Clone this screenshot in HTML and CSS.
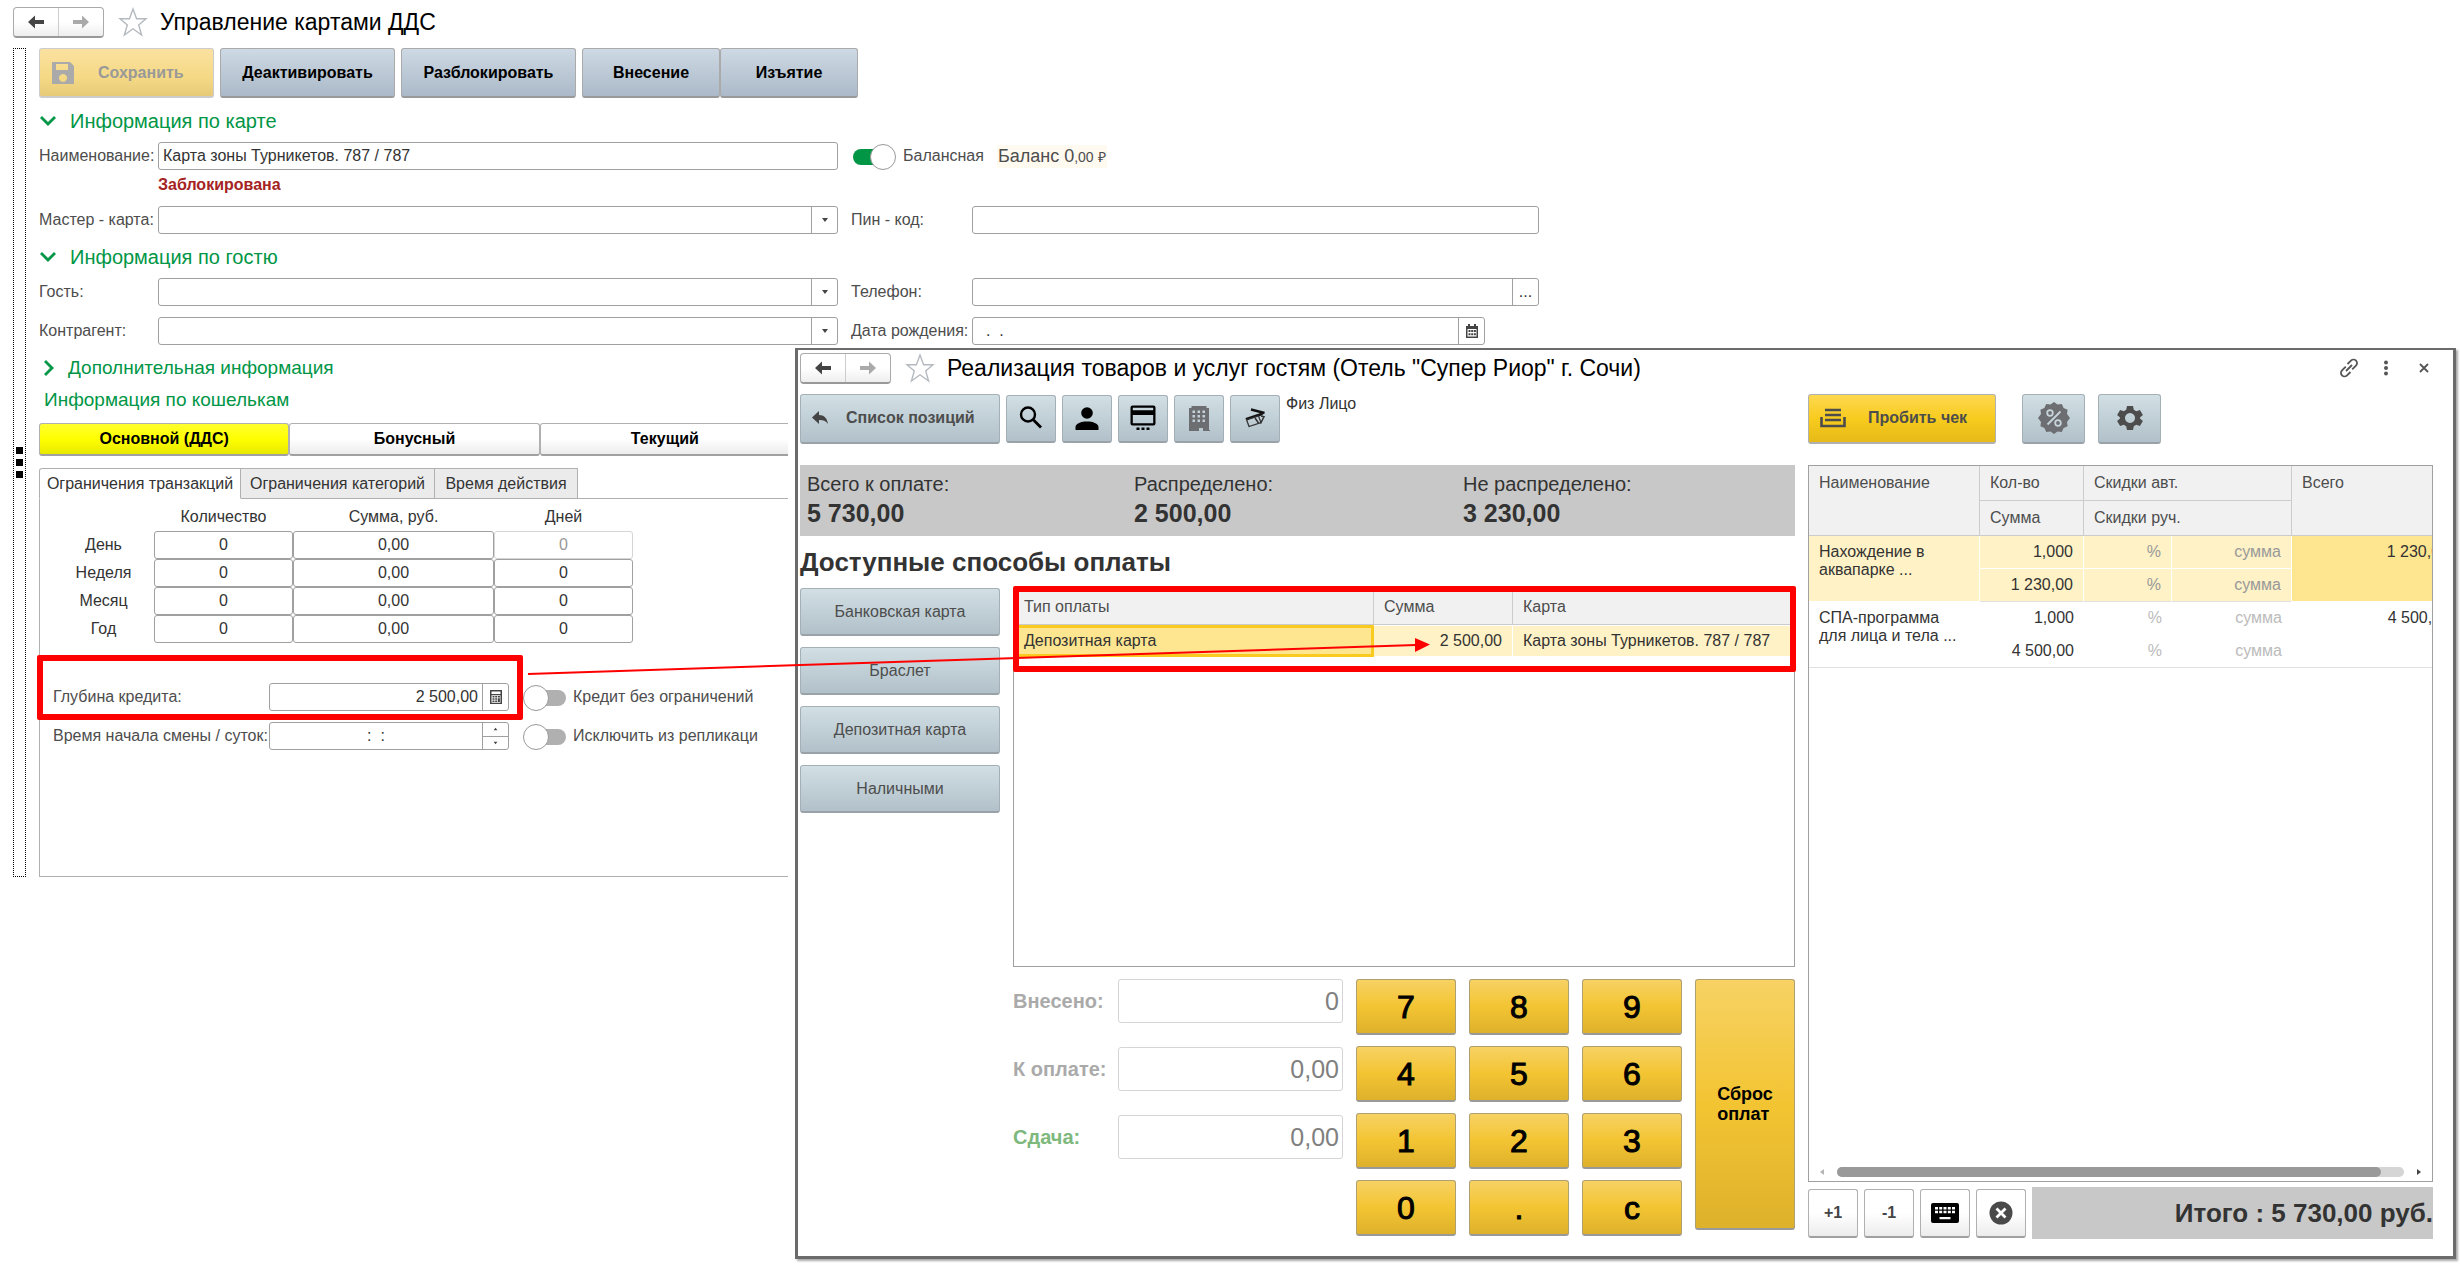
FILE: index.html
```html
<!DOCTYPE html>
<html lang="ru">
<head>
<meta charset="utf-8">
<title>Управление картами ДДС</title>
<link rel="stylesheet" href="styles.css">
</head>
<body>
<svg class="defs" aria-hidden="true">
  <symbol id="i-back" viewBox="0 0 20 16"><path d="M9 1.500 2 8l7 6.500V10h9V6H9z"/></symbol>
  <symbol id="i-fwd" viewBox="0 0 20 16"><path d="M11 1.500 18 8l-7 6.500V10H2V6h9z"/></symbol>
  <symbol id="i-star" viewBox="0 0 30 30"><path d="M15 2l3.600 9.700H28l-7.300 6.200L23.600 28 15 21.800 6.400 28l2.900-10.100L2 11.700h9.400z" fill="none" stroke="#b4bac0" stroke-width="1.400"/></symbol>
  <symbol id="i-open" viewBox="0 0 18 12"><path d="M2 2l7 7 7-7" fill="none" stroke="#009646" stroke-width="2.800"/></symbol>
  <symbol id="i-closed" viewBox="0 0 12 18"><path d="M2 2l7 7-7 7" fill="none" stroke="#009646" stroke-width="2.800"/></symbol>
  <symbol id="i-down" viewBox="0 0 8 6"><path d="M1 1h6L4 5z"/></symbol>
  <symbol id="i-up" viewBox="0 0 8 6"><path d="M1 5h6L4 1z"/></symbol>
</svg>

<main class="page">
  <header class="title-bar">
    <div class="nav-pair">
      <button type="button" aria-label="Назад"><svg class="arrow"><use href="#i-back"/></svg></button>
      <button type="button" aria-label="Вперёд" disabled><svg class="arrow"><use href="#i-fwd"/></svg></button>
    </div>
    <svg class="star"><use href="#i-star"/></svg>
    <h1>Управление картами ДДС</h1>
  </header>

  <div class="workspace">
    <div class="splitter"><i></i><i></i><i></i></div>
    <div class="card-form">
      <div class="commands">
        <button type="button" class="cmd save" disabled><svg viewBox="0 0 24 24" class="disk"><path fill-rule="evenodd" d="M1 1h18l4 4v18H1zM5 3v6h12V3zM12 13a4 4 0 1 0 .01 0z"/></svg><span>Сохранить</span></button>
        <button type="button" class="cmd">Деактивировать</button>
        <button type="button" class="cmd">Разблокировать</button>
        <div class="cmd-group">
          <button type="button" class="cmd">Внесение</button>
          <button type="button" class="cmd">Изъятие</button>
        </div>
      </div>

      <h2 class="group"><svg class="chev"><use href="#i-open"/></svg>Информация по карте</h2>
      <div class="fields">
        <label for="name">Наименование:</label>
        <input class="box" id="name" value="Карта зоны Турникетов. 787 / 787">
        <div class="balance">
          <label class="switch"><input type="checkbox" checked><i></i>Балансная</label>
          <span class="sum"><b>Баланс 0</b>,00 ₽</span>
        </div>
      </div>
      <p class="blocked">Заблокирована</p>
      <div class="fields">
        <label for="master">Мастер - карта:</label>
        <div class="box combo"><input id="master"><button type="button" aria-label="Выбрать"><svg class="tri"><use href="#i-down"/></svg></button></div>
        <label for="pin">Пин - код:</label>
        <input class="box" id="pin">
      </div>

      <h2 class="group second"><svg class="chev"><use href="#i-open"/></svg>Информация по гостю</h2>
      <div class="fields">
        <label for="guest">Гость:</label>
        <div class="box combo"><input id="guest"><button type="button" aria-label="Выбрать"><svg class="tri"><use href="#i-down"/></svg></button></div>
        <label for="phone">Телефон:</label>
        <div class="box combo"><input id="phone"><button type="button">...</button></div>
        <label for="partner">Контрагент:</label>
        <div class="box combo"><input id="partner"><button type="button" aria-label="Выбрать"><svg class="tri"><use href="#i-down"/></svg></button></div>
        <label for="birth">Дата рождения:</label>
        <div class="box combo date"><input id="birth" value="  .  ."><button type="button" aria-label="Календарь"><svg class="cal" viewBox="0 0 14 14"><path fill-rule="evenodd" d="M1 2h2V0h2v2h4V0h2v2h2v12H1zM2.500 5v7.500h9V5z"/><path d="M3.500 6h2v2h-2zM6.200 6h2v2h-2zM8.900 6h2v2h-2zM3.500 9.300h2v2h-2zM6.200 9.300h2v2h-2zM8.900 9.300h2v2h-2z"/></svg></button></div>
      </div>

      <section class="wallets">
        <h2 class="group"><svg class="chev closed"><use href="#i-closed"/></svg>Дополнительная информация</h2>
        <h2 class="group plain">Информация по кошелькам</h2>
        <div class="wallet-tabs">
          <button type="button" class="on">Основной (ДДС)</button>
          <button type="button">Бонусный</button>
          <button type="button">Текущий</button>
        </div>
        <div class="tabs">
          <button type="button" class="on">Ограничения транзакций</button>
          <button type="button">Ограничения категорий</button>
          <button type="button">Время действия</button>
        </div>
        <div class="tab-body">
          <table class="limits">
            <thead><tr><td></td><th>Количество</th><th>Сумма, руб.</th><th>Дней</th></tr></thead>
            <tbody>
              <tr><th>День</th><td><input aria-label="День, количество" value="0"></td><td><input aria-label="День, сумма" value="0,00"></td><td><input aria-label="День, дней" value="0" disabled></td></tr>
              <tr><th>Неделя</th><td><input aria-label="Неделя, количество" value="0"></td><td><input aria-label="Неделя, сумма" value="0,00"></td><td><input aria-label="Неделя, дней" value="0"></td></tr>
              <tr><th>Месяц</th><td><input aria-label="Месяц, количество" value="0"></td><td><input aria-label="Месяц, сумма" value="0,00"></td><td><input aria-label="Месяц, дней" value="0"></td></tr>
              <tr><th>Год</th><td><input aria-label="Год, количество" value="0"></td><td><input aria-label="Год, сумма" value="0,00"></td><td><input aria-label="Год, дней" value="0"></td></tr>
            </tbody>
          </table>
          <div class="credit">
            <div class="marker left"></div>
            <label for="depth">Глубина кредита:</label>
            <div class="box combo num"><input id="depth" value="2 500,00"><button type="button" aria-label="Калькулятор"><svg class="cal" viewBox="0 0 14 14"><path fill-rule="evenodd" d="M1 0h12v14H1zM2.500 1.500V4h9V1.500zM2.500 5.200v7.500h9V5.200z"/><path d="M3.500 6h2v1.500h-2zM6.200 6h2v1.500h-2zM8.900 6h2v1.500h-2zM3.500 8.300h2v1.500h-2zM6.200 8.300h2v1.500h-2zM8.900 8.300h2v3.700h-2zM3.500 10.500h2V12h-2zM6.200 10.500h2V12h-2z"/></svg></button></div>
            <label class="switch"><input type="checkbox"><i></i>Кредит без ограничений</label>
            <label for="shift">Время начала смены / суток:</label>
            <div class="box combo time"><input id="shift" value=":  :"><span class="spin"><button type="button" aria-label="Больше"><svg class="tri"><use href="#i-up"/></svg></button><button type="button" aria-label="Меньше"><svg class="tri"><use href="#i-down"/></svg></button></span></div>
            <label class="switch"><input type="checkbox"><i></i>Исключить из репликаци</label>
          </div>
        </div>
      </section>
    </div>
  </div>
</main>

<section class="window">
  <header class="title-bar">
    <div class="nav-pair">
      <button type="button" aria-label="Назад"><svg class="arrow"><use href="#i-back"/></svg></button>
      <button type="button" aria-label="Вперёд" disabled><svg class="arrow"><use href="#i-fwd"/></svg></button>
    </div>
    <svg class="star"><use href="#i-star"/></svg>
    <h1>Реализация товаров и услуг гостям (Отель "Супер Риор" г. Сочи)</h1>
    <div class="win-tools">
      <button type="button" aria-label="Ссылка"><svg viewBox="0 0 20 20" class="link"><path d="M8.500 6 12 2.600a3.500 3.500 0 0 1 5 5L13.200 11.300M11.500 14 8 17.400a3.500 3.500 0 0 1-5-5L6.800 8.700M7 13l6-6"/></svg></button>
      <button type="button" aria-label="Ещё"><svg viewBox="0 0 6 16" class="dots"><circle cx="3" cy="2.500" r="2"/><circle cx="3" cy="8" r="2"/><circle cx="3" cy="13.500" r="2"/></svg></button>
      <button type="button" aria-label="Закрыть"><svg viewBox="0 0 10 10" class="cross"><path d="M1 1l8 8M9 1 1 9"/></svg></button>
    </div>
  </header>

  <div class="columns">
    <div class="pay">
      <div class="bar">
        <button type="button" class="key back"><svg viewBox="0 0 16 14"><path d="M7 0v4c5 0 8 3 9 9-2-3-4.500-4.200-9-4v4L0 6.500z"/></svg><span>Список позиций</span></button>
        <button type="button" class="key icon" aria-label="Поиск"><svg viewBox="0 0 26 26"><circle cx="10" cy="9.500" r="7" fill="none" stroke="#000" stroke-width="2.400"/><path d="M15 14.500l8 8" stroke="#000" stroke-width="2.800"/></svg></button>
        <button type="button" class="key icon" aria-label="Гость"><svg viewBox="0 0 26 26"><circle cx="13" cy="8" r="5.800"/><path d="M1.500 25v-3c0-7.500 23-7.500 23 0v3z"/></svg></button>
        <button type="button" class="key icon" aria-label="Карта"><svg viewBox="0 0 26 26"><path fill-rule="evenodd" d="M2.500 .5h21q2 0 2 2v16q0 2-2 2h-21q-2 0-2-2v-16q0-2 2-2zM2.800 2.800v2.500h20.400V2.800zM2.800 10v8.200h20.400V10z"/><path d="M6.500 22.500h3V25h-3zM11.500 22.500h3V25h-3zM16.500 22.500h3V25h-3z"/></svg></button>
        <button type="button" class="key icon" aria-label="Организация"><svg viewBox="0 0 26 26" fill="#6d6e71"><path fill-rule="evenodd" d="M3 3h2.500V1h15v2H23v22h1v1h-7v-3h-4v3H3zM6.500 5.500v2.500H9V5.500zM11.500 5.500v2.500h2.500V5.500zM16.500 5.500v2.500h2.500V5.500zM6.500 10v2.500H9V10zM11.500 10v2.500h2.500V10zM16.500 10v2.500h2.500V10zM6.500 14.500V17H9v-2.500zM11.500 14.500V17h2.500v-2.500zM16.500 14.500V17h2.500v-2.500z"/></svg></button>
        <button type="button" class="key icon" aria-label="Платёжные карты"><svg viewBox="0 0 26 26"><path d="M9 4.500 22.500 8" stroke="#111" stroke-width="2.600"/><path d="M3.500 13 20 7.500l1 2.500-16.500 5.500z" fill="#111"/><path d="M4.500 14.500 16.500 11l2.500 6.500L7 21.500z" fill="none" stroke="#333" stroke-width="1.300"/><path d="M19 11l3 .8-3.500 6.700M13 13l3.500 5" fill="none" stroke="#333" stroke-width="1.500"/></svg></button>
        <span class="person">Физ Лицо</span>
      </div>

      <dl class="totals">
        <div><dt>Всего к оплате:</dt><dd>5 730,00</dd></div>
        <div><dt>Распределено:</dt><dd>2 500,00</dd></div>
        <div><dt>Не распределено:</dt><dd>3 230,00</dd></div>
      </dl>

      <h2 class="methods-title">Доступные способы оплаты</h2>
      <div class="methods">
        <div class="method-keys">
          <button type="button" class="key">Банковская карта</button>
          <button type="button" class="key">Браслет</button>
          <button type="button" class="key">Депозитная карта</button>
          <button type="button" class="key">Наличными</button>
        </div>
        <div class="pay-side">
          <div class="pay-list">
            <div class="marker right"></div>
            <table>
              <colgroup><col class="c-type"><col class="c-sum"><col></colgroup>
              <thead><tr><th>Тип оплаты</th><th>Сумма</th><th>Карта</th></tr></thead>
              <tbody><tr><td class="current">Депозитная карта</td><td class="r">2 500,00</td><td>Карта зоны Турникетов. 787 / 787</td></tr></tbody>
            </table>
          </div>
          <div class="cash">
            <div class="amounts">
              <label for="paid">Внесено:</label><input class="box" id="paid" value="0">
              <label for="due">К оплате:</label><input class="box" id="due" value="0,00">
              <label for="change" class="green">Сдача:</label><input class="box" id="change" value="0,00">
            </div>
            <div class="keypad">
              <button type="button">7</button><button type="button">8</button><button type="button">9</button>
              <button type="button">4</button><button type="button">5</button><button type="button">6</button>
              <button type="button">1</button><button type="button">2</button><button type="button">3</button>
              <button type="button">0</button><button type="button">.</button><button type="button">c</button>
              <button type="button" class="reset"><span>Сброс<br>оплат</span></button>
            </div>
          </div>
        </div>
      </div>
    </div>

    <div class="check">
      <div class="bar">
        <button type="button" class="key print"><svg viewBox="0 0 26 20"><path d="M5 2h16M5 7h16M5 12h16" stroke="#4d4d4d" stroke-width="2.400"/><path d="M1.500 9v9h23V9" fill="none" stroke="#4d4d4d" stroke-width="2.600"/></svg><span>Пробить чек</span></button>
        <button type="button" class="key sq" aria-label="Скидки"><svg viewBox="0 0 32 32"><path fill="#6d6e71" d="M16 0l3.500 2.600 4.300-.7 1.800 4 4 1.800-.6 4.300L32 16l-3 4 .6 4.300-4 1.800-1.800 4-4.300-.6L16 32l-3.500-2.500-4.300.6-1.800-4-4-1.800.6-4.300L0 16l3-4-.6-4.300 4-1.800 1.800-4 4.300.7z"/><path d="M22.500 9.500l-13 13" stroke="#c7d4db" stroke-width="1.800"/><circle cx="12" cy="11" r="2.800" fill="none" stroke="#c7d4db" stroke-width="1.800"/><circle cx="20" cy="21" r="2.800" fill="none" stroke="#c7d4db" stroke-width="1.800"/></svg></button>
        <button type="button" class="key sq" aria-label="Настройки"><svg viewBox="0 0 32 32"><path fill="#4d4d4d" fill-rule="evenodd" d="M13 4h6l.8 3.800 2.400 1.400 3.700-1.300 3 5.200-2.900 2.500v.8l2.900 2.500-3 5.200-3.700-1.300-2.400 1.400L19 28h-6l-.8-3.800-2.400-1.400-3.700 1.300-3-5.200L6 16.400v-.8l-2.900-2.500 3-5.200 3.700 1.300 2.400-1.400zM16 11a5 5 0 1 0 .01 0z"/></svg></button>
      </div>
      <div class="items">
        <table>
          <colgroup><col class="i-name"><col class="i-qty"><col class="i-pct"><col class="i-disc"><col class="i-all"></colgroup>
          <thead>
            <tr><th rowspan="2">Наименование</th><th>Кол-во</th><th colspan="2">Скидки авт.</th><th rowspan="2">Всего</th></tr>
            <tr><th>Сумма</th><th colspan="2">Скидки руч.</th></tr>
          </thead>
          <tbody class="sel">
            <tr><td rowspan="2">Нахождение в аквапарке ...</td><td class="r">1,000</td><td class="r hint">%</td><td class="r hint">сумма</td><td rowspan="2" class="r current">1 230,00</td></tr>
            <tr><td class="r">1 230,00</td><td class="r hint">%</td><td class="r hint">сумма</td></tr>
          </tbody>
          <tbody>
            <tr><td rowspan="2">СПА-программа для лица и тела ...</td><td class="r">1,000</td><td class="r hint">%</td><td class="r hint">сумма</td><td rowspan="2" class="r">4 500,00</td></tr>
            <tr><td class="r">4 500,00</td><td class="r hint">%</td><td class="r hint">сумма</td></tr>
          </tbody>
        </table>
        <div class="scroll"><svg viewBox="0 0 6 8"><path d="M5 1v6L1 4z" fill="#b5b5b5"/></svg><div class="track"><div class="thumb"></div></div><svg viewBox="0 0 6 8"><path d="M1 1v6l4-3z" fill="#444"/></svg></div>
      </div>
      <div class="foot">
        <button type="button" class="light">+1</button>
        <button type="button" class="light">-1</button>
        <button type="button" class="light" aria-label="Клавиатура"><svg viewBox="0 0 28 20" class="kbd"><path fill-rule="evenodd" d="M2 0h24q2 0 2 2v16q0 2-2 2H2q-2 0-2-2V2q0-2 2-2zM4 4v2.500h3V4zM8.200 4v2.500h3V4zM12.500 4v2.500h3V4zM16.800 4v2.500h3V4zM21 4v2.500h3V4zM4 7.800v2.500h3V7.800zM8.200 7.800v2.500h3V7.800zM12.500 7.800v2.500h3V7.800zM16.800 7.800v2.500h3V7.800zM21 7.800v2.500h3V7.800zM8.500 14v2.200h11V14z"/></svg></button>
        <button type="button" class="light" aria-label="Удалить"><svg viewBox="0 0 24 24" class="del"><circle cx="12" cy="12" r="11.500" fill="#4a4a4a"/><path d="M7.500 7.500l9 9M16.500 7.500l-9 9" stroke="#fff" stroke-width="2.800"/></svg></button>
        <output class="grand">Итого : 5 730,00 руб.</output>
      </div>
    </div>
  </div>
</section>

<svg class="pointer" viewBox="0 0 906 50" aria-hidden="true"><path d="M1 39 889 10" stroke="red" stroke-width="2"/><path d="M888 3l15 6.500L888 17z" fill="red"/></svg>
</body>
</html>
```
FILE: styles.css
```css
* { box-sizing: border-box; }
body { margin: 0; position: relative; display: grid; min-height: 100vh; background: #fff; color: #333; font: 16px/20px "Liberation Sans", Arial, sans-serif; }
h1, h2, p, dl, dd { margin: 0; font-weight: normal; }
button, input { font: inherit; color: inherit; margin: 0; }
button { padding: 0; background: none; border: 0; border-radius: 3px; }
svg { display: block; }
.defs { position: absolute; width: 0; height: 0; }
table { border-collapse: separate; border-spacing: 0; }
th { font-weight: normal; text-align: left; }
.r { text-align: right; }

/* title bars */
.title-bar { display: flex; align-items: center; gap: 14px; height: 30px; }
.title-bar h1 { font-size: 23px; line-height: 26px; color: #000; margin-left: -2px; }
.nav-pair { display: flex; width: 91px; height: 31px; border: 1px solid #aaa; border-bottom: 2px solid #999; border-radius: 4px; background: linear-gradient(#fff, #fff 50%, #eee); }
.nav-pair button { flex: 1; display: flex; align-items: center; justify-content: center; fill: #444; }
.nav-pair button + button { border-left: 1px solid #ccc; border-radius: 0; fill: #aaa; }
.arrow { width: 20px; height: 16px; }
.star { width: 30px; height: 30px; }

/* main form */
.page { grid-area: 1 / 1; min-width: 0; padding: 7px 0 0 13px; }
.workspace { display: flex; gap: 13px; margin-top: 11px; }
.splitter { width: 13px; border: 1px dotted #000; display: flex; flex-direction: column; align-items: center; justify-content: center; gap: 5px; }
.splitter i { width: 7px; height: 7px; background: #000; }
.card-form { width: 61.3%; min-width: 0; }
.commands, .cmd-group { display: flex; }
.commands { gap: 6px; }
.cmd { width: 175px; height: 50px; border: 1px solid #aaa; border-bottom: 2px solid #999; background: linear-gradient(#cdd9e4, #b9c6d3 60%, #acb9c9); font-weight: bold; color: #000; }
.cmd-group .cmd { width: 138px; }
.save { display: flex; align-items: center; background: linear-gradient(#fae1a0, #f5d985 60%, #e6ca78); border-color: #ccc; color: #999; padding-left: 11px; gap: 23px; }
.disk { width: 24px; height: 24px; fill: #aaa; }
.group { display: flex; align-items: center; gap: 13px; font-size: 20px; line-height: 24px; color: #009646; margin: 11px 0 9px; }
.chev { width: 18px; height: 12px; }
.chev.closed { width: 12px; height: 18px; margin-left: 4px; }
.fields { display: grid; grid-template-columns: 119px 680fr 134px 567fr; row-gap: 11px; align-items: center; color: #4d4d4d; white-space: nowrap; }
.fields > label:nth-of-type(even) { padding-left: 13px; }
.box { height: 28px; width: 100%; min-width: 0; border: 1px solid #a0a0a0; border-radius: 3px; background: #fff; padding: 0 4px; color: #333; }
.combo { display: flex; padding: 0; }
.combo input { flex: 1; min-width: 0; border: 0; background: none; padding: 0 4px; }
.combo > button { width: 26px; border-left: 1px solid #a0a0a0; border-radius: 0; display: flex; align-items: center; justify-content: center; fill: #444; }
.tri { width: 8px; height: 6px; fill: #444; }
.cal { width: 14px; height: 14px; fill: #444; }
.date { width: calc(100% - 54px); }
.date input { white-space: pre; }
.balance { grid-column: span 2; display: flex; align-items: center; gap: 13px; padding-left: 15px; }
.switch { position: relative; display: flex; align-items: center; gap: 7px; color: #4d4d4d; white-space: nowrap; }
.switch input { position: absolute; opacity: 0; }
.switch i { width: 43px; height: 24px; display: grid; grid-template-columns: 1fr; align-items: center; }
.switch i::before, .switch i::after { content: ""; grid-area: 1 / 1; }
.switch i::before { width: 30px; height: 16px; border-radius: 8px; background: #b0b0b0; justify-self: end; }
.switch i::after { width: 24px; height: 24px; border: 1px solid #999; border-radius: 50%; background: #fff; justify-self: start; }
.switch input:checked + i::before { justify-self: start; background: #009646; }
.switch input:checked + i::after { justify-self: end; }
.sum { background: #fffaf0; font-size: 14px; padding: 1px; }
.sum b { font-weight: normal; font-size: 18px; }
.blocked { margin: 5px 0 11px 119px; font-weight: bold; color: #a52323; }

/* wallets */
.wallets { width: 753px; overflow: hidden; margin-left: -4px; padding-left: 4px; }
.wallets .group { margin: 11px 0 8px; font-size: 19px; }
.wallets .group.plain { margin: 0 0 11px 5px; }
.wallet-tabs { display: flex; width: 751px; }
.wallet-tabs button { flex: 1; height: 33px; border: 1px solid #b0b0b0; border-bottom: 2px solid #a0a0a0; background: linear-gradient(#fff, #fff 50%, #ececec); font-weight: bold; color: #000; }
.wallet-tabs .on { background: linear-gradient(#ffff30, #ff0 50%, #e8e800); }
.tabs { position: relative; display: grid; grid-template-columns: 202px 194px 143px; margin-top: 12px; }
.tabs button { height: 31px; border: 1px solid #b0b0b0; border-left: 0; border-radius: 0; background: #ebebeb; white-space: nowrap; }
.tabs .on { border-left: 1px solid #b0b0b0; border-bottom-color: #fff; background: #fff; border-radius: 3px 0 0; }
.tab-body { border: 1px solid #b0b0b0; border-right: 0; margin-top: -1px; height: 379px; padding: 4px 0 0 13px; }
.limits { table-layout: fixed; width: 580px; }
.limits th, .limits td { text-align: center; padding: 0; height: 28px; }
.limits thead td { width: 101px; }
.limits thead th { width: 139px; }
.limits thead th:nth-child(3) { width: 201px; }
.limits input { display: block; width: 100%; height: 28px; border: 1px solid #a0a0a0; border-radius: 3px; text-align: center; background: #fff; padding: 0; }
.limits input:disabled { border-color: #d5d5d5; color: #999; }
.credit { position: relative; display: grid; grid-template-columns: 216px 240px 1fr; row-gap: 11px; align-items: center; margin-top: 40px; color: #4d4d4d; white-space: nowrap; }
.credit .switch { padding-left: 14px; }
.num input { text-align: right; }
.time input { text-align: center; white-space: pre; }
.spin { display: flex; flex-direction: column; width: 26px; border-left: 1px solid #a0a0a0; }
.spin button { flex: 1; display: flex; align-items: center; justify-content: center; }
.spin button + button { border-top: 1px solid #a0a0a0; border-radius: 0; }
.spin .tri { width: 5px; height: 4px; }
.marker { position: absolute; border: 6px solid red; border-radius: 2px; }
.marker.left { left: -16px; top: -28px; width: 486px; height: 65px; }
.marker.right { left: -1px; right: -2px; top: -3px; height: 86px; }

/* payment window, lies over the form */
.window { grid-area: 1 / 1; position: relative; align-self: start; min-width: 0; margin: 348px 4px 5px 795px; border: 3px solid #6b6b6b; border-top-width: 2px; background: #fff; padding: 3px 20px 17px 2px; box-shadow: 2px 2px 2px #aaa; }
.win-tools { margin-left: auto; display: flex; align-items: center; gap: 24px; }
.win-tools svg { fill: #555; }
.win-tools path { fill: none; stroke: #555; stroke-width: 1.800; }
.link { width: 20px; height: 20px; }
.dots { width: 6px; height: 16px; }
.cross { width: 10px; height: 10px; margin: 0 4px 0 6px; }
.columns { display: grid; grid-template-columns: 995fr 625fr; gap: 13px; margin-top: 11px; }
.pay, .check { min-width: 0; }
.bar { display: flex; align-items: center; gap: 6px; height: 49px; margin-bottom: 22px; }
.key { height: 48px; border: 1px solid #a5b0b6; border-bottom: 2px solid #98a2a8; background: linear-gradient(#d2dfe4, #c1d0d7 50%, #b2c1c9); color: #4d4d4d; }
.key.back, .key.print { display: flex; align-items: center; width: 200px; height: 50px; font-weight: bold; padding-left: 11px; gap: 18px; }
.back svg { width: 16px; height: 14px; fill: #444; }
.icon { width: 50px; display: flex; align-items: center; justify-content: center; }
.icon svg { width: 26px; height: 26px; }
.person { align-self: flex-start; }
.key.print { width: 188px; gap: 22px; margin-right: 20px; border-color: #b0b0b0; background: linear-gradient(#fdd850, #f8cb1e 50%, #e6ba18); }
.print svg { width: 26px; height: 20px; }
.sq { width: 63px; height: 50px; display: flex; align-items: center; justify-content: center; margin-right: 7px; }
.sq svg { width: 32px; height: 32px; }
.totals { display: grid; grid-template-columns: 327fr 329fr 332fr; background: #c8c8c8; height: 71px; padding: 7px 0 0 7px; }
.totals dt { font-size: 20px; line-height: 24px; }
.totals dd { font-size: 25px; line-height: 34px; font-weight: bold; }
.methods-title { font-size: 26px; line-height: 32px; font-weight: bold; margin: 10px 0; }
.methods { display: grid; grid-template-columns: 200px 1fr; column-gap: 13px; }
.method-keys { display: grid; align-content: start; gap: 11px; }
.pay-side { min-width: 0; }
.pay-list { position: relative; height: 379px; border: 1px solid #a0a0a0; }
.pay-list table { width: 100%; table-layout: fixed; }
.c-type { width: 360px; }
.c-sum { width: 139px; }
.window th { background: #f1f1f1; color: #4d4d4d; border-right: 1px solid #ccc; border-bottom: 1px solid #ccc; padding: 5px 10px; }
.pay-list th { height: 36px; }
.pay-list td { height: 32px; padding: 0 10px; background: #fff2c6; border: solid #fff; border-width: 1px 1px 1px 0; }
.pay-list td.current { background: #fee590; border: 3px solid #fbca20; padding: 0 7px; }
.cash { display: flex; justify-content: space-between; gap: 13px; margin-top: 12px; }
.amounts { flex: 1; display: grid; grid-template-columns: 105px 1fr; row-gap: 24px; align-content: start; align-items: center; }
.amounts label { font-size: 20px; line-height: 24px; font-weight: bold; color: #aaa; white-space: nowrap; }
.amounts .green { color: #7db87d; }
.amounts .box { height: 44px; border-color: #d5d5d5; font-size: 25px; text-align: right; color: #808080; padding: 0 3px; }
.keypad { display: grid; grid-template-columns: repeat(4, 100px); grid-auto-rows: 56px; gap: 11px 13px; }
.keypad button { border: 1px solid #b0a070; border-bottom: 2px solid #999; background: linear-gradient(#f7d264, #f3c432 50%, #deb12c); color: #000; font-size: 32px; line-height: 36px; -webkit-text-stroke: 1px #000; }
.keypad .reset { grid-area: 1 / 4 / 5 / 5; margin-bottom: 6px; font-size: 18px; line-height: 20px; font-weight: bold; -webkit-text-stroke: 0; }
.reset span { display: inline-block; text-align: left; }
.items { border: 1px solid #a0a0a0; height: 717px; overflow: hidden; display: flex; flex-direction: column; }
.items table { table-layout: fixed; width: 700px; }
.i-name { width: 171px; }
.i-qty { width: 104px; }
.i-pct { width: 88px; }
.i-disc { width: 120px; }
.items th { vertical-align: top; height: 35px; padding-top: 7px; }
.items td { vertical-align: top; height: 33px; padding: 7px 10px; line-height: 18px; }
.items tbody tr:last-child td, .items td[rowspan] { border-bottom: 1px solid #e0e0e0; }
.items .sel td { background: #fff2c6; border-right: 1px solid #fff; border-bottom: 1px solid #fff; }
.items .sel .current { background: #fee590; }
.items .hint { color: #bbb; }
.items .sel .hint { color: #999; }
.items td:last-child[rowspan] { padding-right: 59px; }
.scroll { margin: auto 10px 4px; display: flex; align-items: center; gap: 12px; height: 10px; }
.scroll svg { width: 6px; height: 8px; }
.track { flex: 1; height: 10px; border-radius: 5px; background: #d5d5d5; }
.thumb { width: 96%; height: 10px; border-radius: 5px; background: #999; }
.foot { display: flex; align-items: center; gap: 6px; margin-top: 5px; }
.light { width: 50px; height: 49px; border: 1px solid #b0b0b0; border-bottom: 2px solid #a0a0a0; background: linear-gradient(#fff, #fff 50%, #ececec); display: flex; align-items: center; justify-content: center; color: #444; font-weight: bold; }
.kbd { width: 28px; height: 20px; }
.del { width: 24px; height: 24px; }
.grand { flex: 1; background: #c8c8c8; text-align: right; font-size: 26px; line-height: 52px; font-weight: bold; white-space: nowrap; }
.pointer { position: absolute; left: 527px; top: 635px; width: 906px; height: 50px; }
```
